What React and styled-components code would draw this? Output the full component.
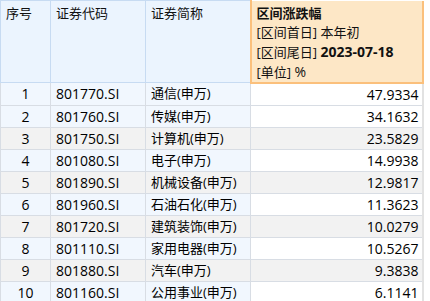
import React from "react";
import styled, { createGlobalStyle } from "styled-components";

const Global = createGlobalStyle`
  html, body { margin: 0; padding: 0; background: #ffffff; }
  body { font-family: "Open Sans", "Noto Sans CJK SC", sans-serif; }
  #root { width: 430px; height: 301px; overflow: hidden; }
`;

const Table = styled.table`
  border-collapse: collapse;
  table-layout: fixed;
  width: 422px;
  font-size: 13px;
  color: #000;
`;

const HeadCell = styled.th`
  height: 78px;
  box-sizing: border-box;
  padding: 3px 5px 0;
  vertical-align: top;
  text-align: left;
  font-weight: normal;
  line-height: 19px;
  color: #111;
  background: ${(p) => (p.$hot ? "#fde7c6" : "#ebf4fe")};
  border: 1px solid #c7dbf2;
  ${(p) => p.$hot && `border: 2px solid #fbc07c; border-top: none;`}
`;

const Row = styled.tr`
  height: 22px;
`;

const Cell = styled.td`
  box-sizing: border-box;
  padding: 0 5px;
  height: 22px;
  line-height: 21px;
  white-space: nowrap;
  overflow: hidden;
  font-size: ${(p) => (p.$latin ? "14px" : "13px")};
  text-align: ${(p) => p.$align || "left"};
  background: ${(p) => (p.$striped ? "#f2f2f2" : p.$frozen ? "#f1f7fe" : "#ffffff")};
  border: 1px solid #d8dde4;
  ${(p) => p.$hot && `border-right: 2px solid #e2e2e2; padding-right: 3px;`}
`;

const Bold = styled.span`
  font-weight: bold;
`;

const Latin = styled.span`
  font-size: 14px;
  font-weight: ${(p) => (p.$bold ? "bold" : "normal")};
`;

const rows = [
  ["1", "801770.SI", "通信(申万)", "47.9334"],
  ["2", "801760.SI", "传媒(申万)", "34.1632"],
  ["3", "801750.SI", "计算机(申万)", "23.5829"],
  ["4", "801080.SI", "电子(申万)", "14.9938"],
  ["5", "801890.SI", "机械设备(申万)", "12.9817"],
  ["6", "801960.SI", "石油石化(申万)", "11.3623"],
  ["7", "801720.SI", "建筑装饰(申万)", "10.0279"],
  ["8", "801110.SI", "家用电器(申万)", "10.5267"],
  ["9", "801880.SI", "汽车(申万)", "9.3838"],
  ["10", "801160.SI", "公用事业(申万)", "6.1141"],
  ["", "", "", ""],
];

export default function App() {
  return (
    <>
      <Global />
      <Table>
        <colgroup>
          <col style={{ width: 50 }} />
          <col style={{ width: 95 }} />
          <col style={{ width: 105 }} />
          <col style={{ width: 172 }} />
        </colgroup>
        <thead>
          <tr>
            <HeadCell>序号</HeadCell>
            <HeadCell>证券代码</HeadCell>
            <HeadCell>证券简称</HeadCell>
            <HeadCell $hot>
              <Bold>区间涨跌幅</Bold>
              <br />
              [区间首日] 本年初
              <br />
              [区间尾日] <Latin $bold>2023-07-18</Latin>
              <br />
              [单位] <Latin>%</Latin>
            </HeadCell>
          </tr>
        </thead>
        <tbody>
          {rows.map((r, i) => {
            const striped = i % 2 === 0 && i > 0;
            return (
              <Row key={i}>
                <Cell $align="center" $latin $frozen $striped={striped}>{r[0]}</Cell>
                <Cell $latin $frozen $striped={striped}>{r[1]}</Cell>
                <Cell $frozen $striped={striped}>{r[2]}</Cell>
                <Cell $align="right" $latin $hot $striped={striped}>{r[3]}</Cell>
              </Row>
            );
          })}
        </tbody>
      </Table>
    </>
  );
}
